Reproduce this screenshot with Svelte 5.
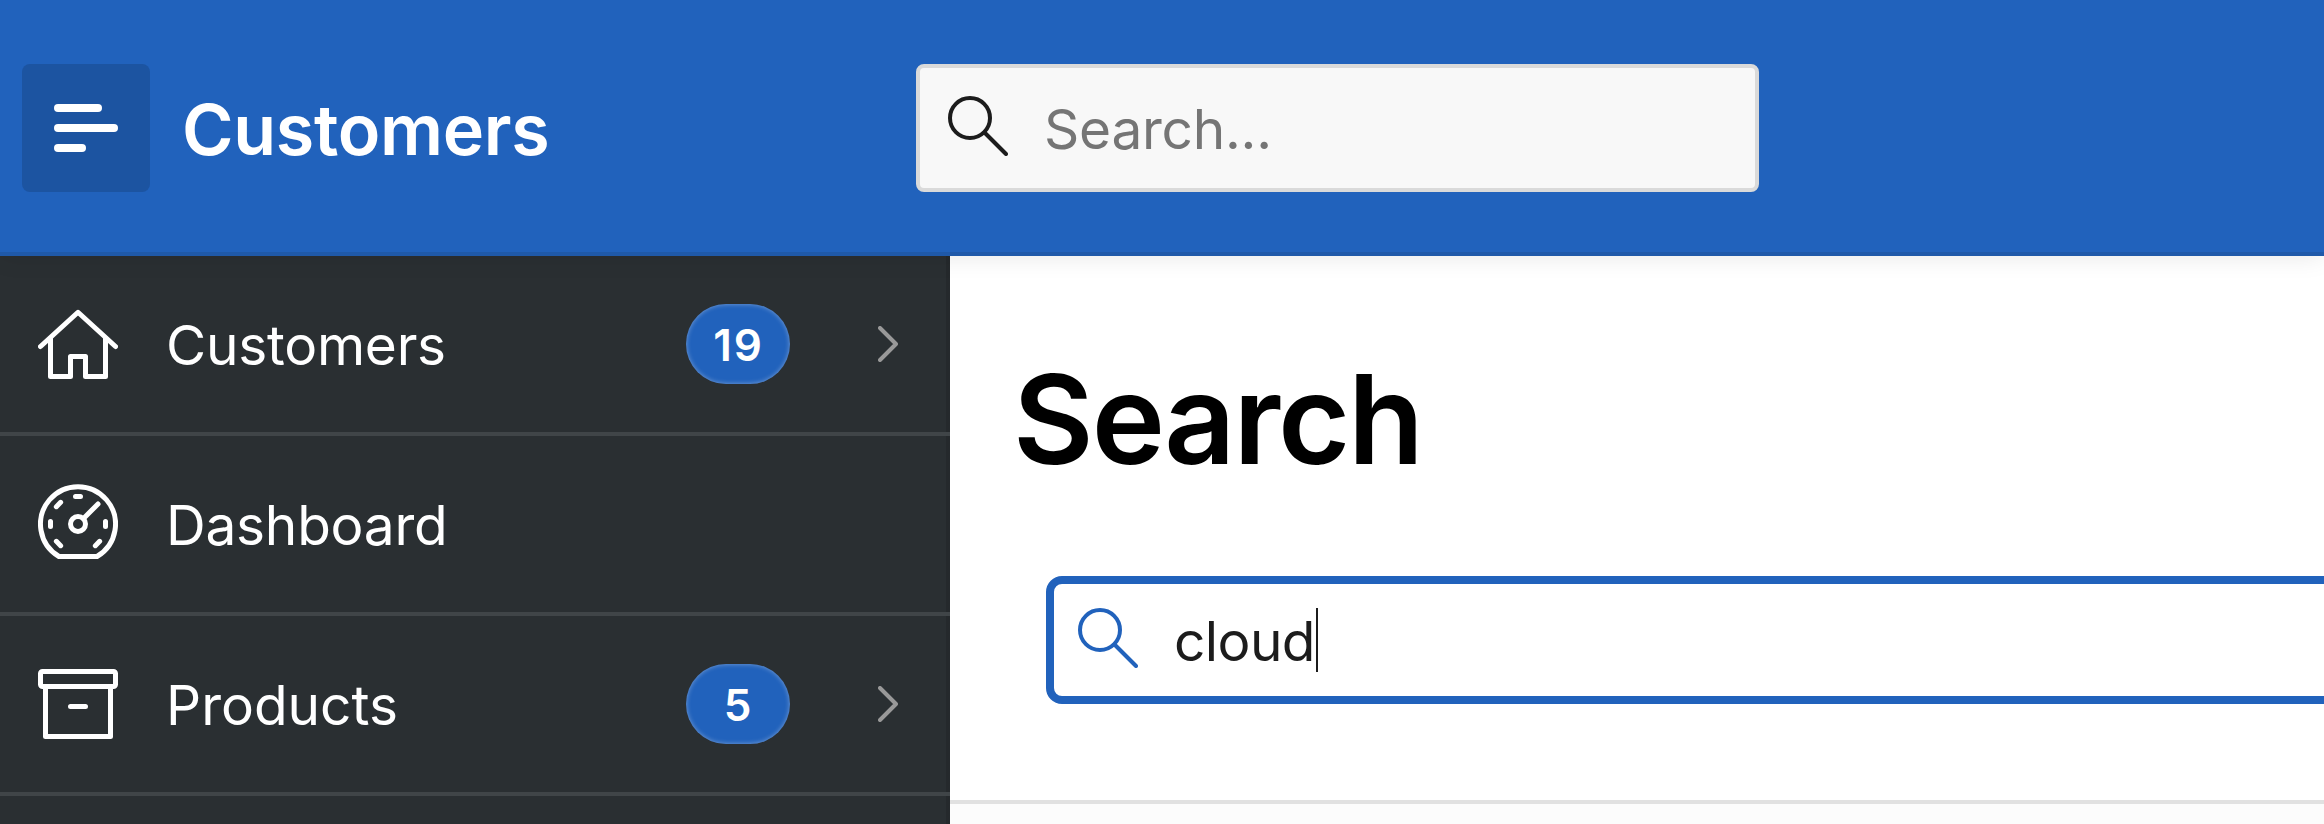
<script>
  const items = [
    { label: 'Customers', icon: 'home', count: 19 },
    { label: 'Dashboard', icon: 'gauge', count: null },
    { label: 'Products', icon: 'box', count: 5 },
  ];
</script>

{#snippet magnifier()}
  <svg class="magnifier" viewBox="0 0 60 60" fill="none" stroke="currentColor" stroke-width="4">
    <circle cx="22" cy="22" r="20" />
    <path d="M36.5 36.5 58 58" stroke-linecap="round" />
  </svg>
{/snippet}

<div class="app">
  <header>
    <button class="toggle" aria-label="Menu">
      <svg viewBox="0 0 64 48" fill="#fff">
        <rect width="48" height="8" rx="4" />
        <rect y="20" width="64" height="8" rx="4" />
        <rect y="40" width="32" height="8" rx="4" />
      </svg>
    </button>
    <div class="brand">Customers</div>
    <div class="quick">
      {@render magnifier()}
      <span>Search...</span>
    </div>
  </header>

  <div class="body">
    <nav>
      {#each items as item}
        <div class="item">
          <svg class="icon" viewBox="0 0 16 16" fill="none" stroke="#fff" stroke-linecap="round" stroke-linejoin="round">
            {#if item.icon === 'home'}
              <path d="M.5 8.5 8 1.65l7.5 6.85" />
              <path d="M2.5 6.9v7.6h4v-4h3v4h4V6.9" />
            {:else if item.icon === 'gauge'}
              <path d="M4.2 14.5a7.5 7.5 0 1 1 7.6 0z" />
              <circle cx="8" cy="8" r="1.5" />
              <path d="M9.1 6.9 12 4M7.5 2.5h1M2.5 7.5v1M13.5 7.5v1M3.67 4.53l.86-.86M3.67 11.47l.86.86M12.33 11.47l-.86.86" />
            {:else}
              <rect x=".5" y="1.5" width="15" height="3" rx=".4" />
              <path d="M1.5 4.5v10h13v-10M6.5 8.5h3" />
            {/if}
          </svg>
          <span class="label" class:loose={item.icon === 'box'}>{item.label}</span>
          {#if item.count !== null}
            <span class="badge">{item.count}</span>
            <svg class="chevron" viewBox="0 0 20 36" fill="none" stroke="#999" stroke-width="4" stroke-linecap="round" stroke-linejoin="round">
              <path d="m2 2 16 16L2 34" />
            </svg>
          {/if}
        </div>
      {/each}
    </nav>

    <main>
      <section>
        <h1>Search</h1>
        <div class="field">
          {@render magnifier()}
          <span>cloud</span>
          <i class="caret"></i>
        </div>
      </section>
    </main>
  </div>
</div>

<style>
  .app {
    width: 2324px;
    height: 824px;
    overflow: hidden;
    display: flex;
    flex-direction: column;
    font-family: Inter, 'Liberation Sans', sans-serif;
    font-size: 55px;
    line-height: 66px;
    letter-spacing: -0.25px;
    background: #fff;
  }
  svg { display: block; flex: none; }

  header {
    flex: none;
    display: flex;
    box-sizing: border-box;
    height: 256px;
    padding: 64px 22px 0;
    background: #2162bc;
    border-bottom: 4px solid #1f59a9;
    box-shadow: 0 0 24px rgba(0, 0, 0, 0.1);
    position: relative;
  }
  .toggle {
    width: 128px;
    height: 128px;
    padding: 0 32px;
    border: 0;
    border-radius: 8px;
    background: #1c54a1;
  }
  .toggle svg { width: 64px; height: 48px; }
  .brand {
    box-sizing: border-box;
    width: 734px;
    margin-left: 32px;
    padding-top: 2px;
    height: 128px;
    line-height: 127px;
    font-size: 70px;
    font-weight: 600;
    letter-spacing: -0.3px;
    color: #fff;
  }
  .quick {
    display: flex;
    align-items: center;
    box-sizing: border-box;
    width: 843px;
    height: 128px;
    padding-left: 28px;
    border: 4px solid #dadada;
    border-radius: 8px;
    background: #f8f8f8;
    color: #1c1c1c;
  }
  .quick span { margin-left: 36px; padding-top: 2px; color: #757575; }
  .magnifier { width: 60px; height: 60px; margin-bottom: 4px; }

  .body { flex: 1; display: flex; min-height: 0; }
  nav {
    flex: none;
    box-sizing: border-box;
    width: 950px;
    background: linear-gradient(90deg, #2a2f32 946px, #25292c 946px);
    color: #fff;
  }
  .item {
    display: flex;
    align-items: center;
    box-sizing: border-box;
    height: 180px;
    padding: 0 52px 0 38px;
    border-bottom: 4px solid #404548;
  }
  .icon { width: 80px; height: 80px; }
  .label { flex: 1; margin-left: 48px; padding-top: 2px; }
  .loose { letter-spacing: 0; }
  .badge {
    box-sizing: border-box;
    width: 104px;
    height: 80px;
    padding: 2px 0 0 1px;
    margin-right: 88px;
    border-radius: 40px;
    background: #2162bc;
    box-shadow: inset 0 0 5px rgba(255, 255, 255, 0.4);
    font-size: 44px;
    font-weight: 600;
    line-height: 78px;
    letter-spacing: 2px;
    text-align: center;
  }
  .chevron { width: 20px; height: 36px; }

  main { flex: 1; background: #fcfcfc; }
  section {
    box-sizing: border-box;
    height: 548px;
    padding: 88px 0 0 63px;
    background: #fff;
    border-bottom: 4px solid #e1e1e1;
  }
  h1 {
    margin: 0 0 82px;
    line-height: 150px;
    font-size: 124px;
    font-weight: 600;
    letter-spacing: -2px;
    color: #000;
  }
  .field {
    display: flex;
    align-items: center;
    box-sizing: border-box;
    height: 128px;
    width: 1400px;
    margin-left: 33px;
    padding-left: 24px;
    border: 8px solid #2162bc;
    border-radius: 16px;
    color: #2162bc;
  }
  .field span { margin-left: 36px; padding-top: 2px; letter-spacing: -0.6px; color: #1c1c1c; }
  .caret { width: 2px; height: 64px; margin-left: 1px; background: #1c1c1c; }
</style>
